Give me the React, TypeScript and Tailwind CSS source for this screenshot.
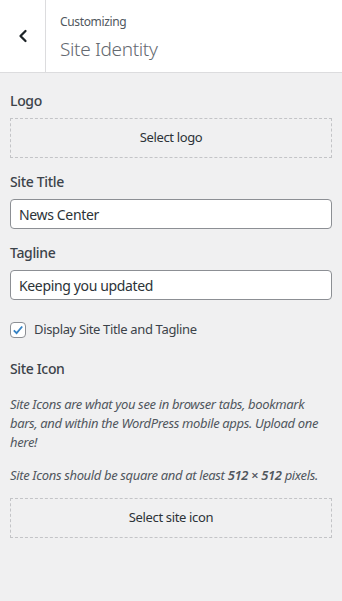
import { ChevronLeft } from 'lucide-react';

function DashedButton({ label }: { label: string }) {
  return (
    <div className="flex h-[40px] w-full items-center justify-center border border-dashed border-[#c3c4c7] text-[13px] text-[#2c3338]">
      {label}
    </div>
  );
}

function Label({ children }: { children: string }) {
  return <p className="text-[14px] font-medium leading-[20px] text-[#3c434a]">{children}</p>;
}

function TextField({ value }: { value: string }) {
  return (
    <div className="flex h-[30px] w-full items-center rounded-[4px] border border-[#8c8f94] bg-white px-[8px] text-[14px] text-[#2c3338]">
      {value}
    </div>
  );
}

export default function App() {
  return (
    <div
      className="flex h-[601px] w-[342px] flex-col bg-[#f0f0f1] tracking-[-0.35px]"
      style={{ fontFamily: '"Noto Sans", "Open Sans", sans-serif' }}
    >
      <div className="flex h-[73px] shrink-0 border-b border-[#dcdcde] bg-white">
        <div className="flex w-[46px] items-center justify-center border-r border-[#dcdcde]">
          <ChevronLeft size={20} strokeWidth={2.75} className="text-[#1d2327]" />
        </div>
        <div className="flex flex-col pl-[14px] pt-[13px]">
          <span className="text-[12px] leading-[18px] text-[#50575e]">Customizing</span>
          <span className="mt-[6px] text-[19px] font-light leading-[24px] text-[#646970]">Site Identity</span>
        </div>
      </div>

      <div className="flex flex-col px-[10px] pt-[18px]">
        <Label>Logo</Label>
        <div className="mt-[7px]">
          <DashedButton label="Select logo" />
        </div>

        <div className="mt-[14px]">
          <Label>Site Title</Label>
        </div>
        <div className="mt-[7px]">
          <TextField value="News Center" />
        </div>

        <div className="mt-[14px]">
          <Label>Tagline</Label>
        </div>
        <div className="mt-[7px]">
          <TextField value="Keeping you updated" />
        </div>

        <div className="mt-[20px] flex items-center gap-[8px]">
          <div className="flex h-[16px] w-[16px] items-center justify-center rounded-[4px] border border-[#8c8f94] bg-white">
            <svg width="14" height="14" viewBox="0 0 20 20">
              <path d="M4 10.5 L8 14.5 L16 5" fill="none" stroke="#3582c4" strokeWidth="2.6" />
            </svg>
          </div>
          <span className="text-[13px] text-[#3c434a]">Display Site Title and Tagline</span>
        </div>

        <div className="mt-[19px]">
          <Label>Site Icon</Label>
        </div>
        <p className="mt-[16px] text-[13px] italic leading-[19px] text-[#50575e]">
          Site Icons are what you see in browser tabs, bookmark bars, and within the WordPress mobile apps. Upload one here!
        </p>
        <p className="mt-[14px] text-[13px] italic leading-[19px] text-[#50575e]">
          Site Icons should be square and at least <strong className="font-semibold">512 × 512</strong> pixels.
        </p>
        <div className="mt-[13px]">
          <DashedButton label="Select site icon" />
        </div>
      </div>
    </div>
  );
}
